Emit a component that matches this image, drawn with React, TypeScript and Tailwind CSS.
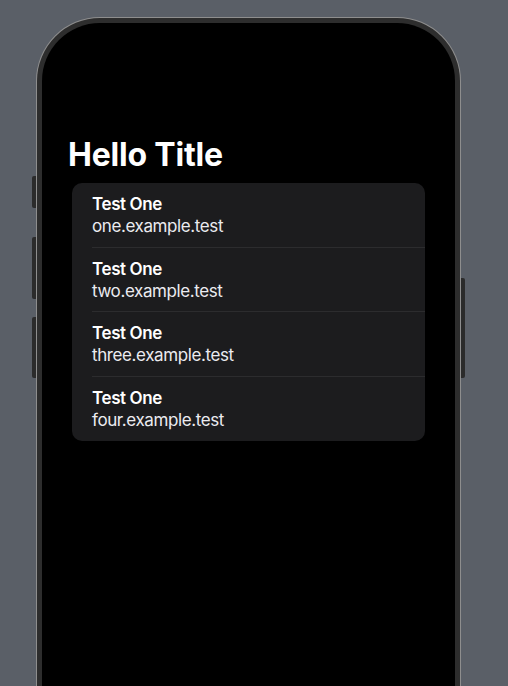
import React from "react";

const rows = [
  "one.example.test",
  "two.example.test",
  "three.example.test",
  "four.example.test",
];

export default function App() {
  return (
    <div
      className="relative h-[686px] w-[508px] overflow-hidden bg-[#5a5f67]"
      style={{ fontFamily: "Inter, 'Noto Sans', sans-serif" }}
    >
      {/* side buttons */}
      <div className="absolute left-[32px] top-[176px] h-[32px] w-[4px] rounded-l-[2px] bg-[#2b2b2b]" />
      <div className="absolute left-[32px] top-[237px] h-[62px] w-[4px] rounded-l-[2px] bg-[#2b2b2b]" />
      <div className="absolute left-[32px] top-[317px] h-[61px] w-[4px] rounded-l-[2px] bg-[#2b2b2b]" />
      <div className="absolute left-[461px] top-[278px] h-[100px] w-[4px] rounded-r-[2px] bg-[#2b2b2b]" />

      <div className="ml-[36px] mt-[17px] w-[425px] rounded-t-[64px] bg-[#8e8e8e] px-px pt-px">
        <div className="h-[720px] rounded-t-[63px] bg-[#2d2d2d] px-[5px] pt-[5px]">
          <div className="h-full rounded-t-[58px] bg-black px-[30px] pt-[113px]">
            <h1 className="-ml-[4px] text-[32px] font-bold leading-[38px] tracking-[-0.2px] text-white">
              Hello Title
            </h1>
            <div className="mt-[9px] rounded-[10px] bg-[#1c1c1e]">
              {rows.map((r, i) => (
                <div key={r} className="pl-[20px]">
                  <div
                    className={
                      "flex h-[64.5px] flex-col justify-center pt-[1px] tracking-[-0.4px] " +
                      (i < rows.length - 1 ? "border-b border-[#2c2c2e]" : "")
                    }
                  >
                    <div className="text-[17px] font-semibold leading-[22px] text-white">
                      Test One
                    </div>
                    <div className="text-[17px] leading-[22px] text-[#ebebf0]">
                      {r}
                    </div>
                  </div>
                </div>
              ))}
            </div>
          </div>
        </div>
      </div>
    </div>
  );
}
